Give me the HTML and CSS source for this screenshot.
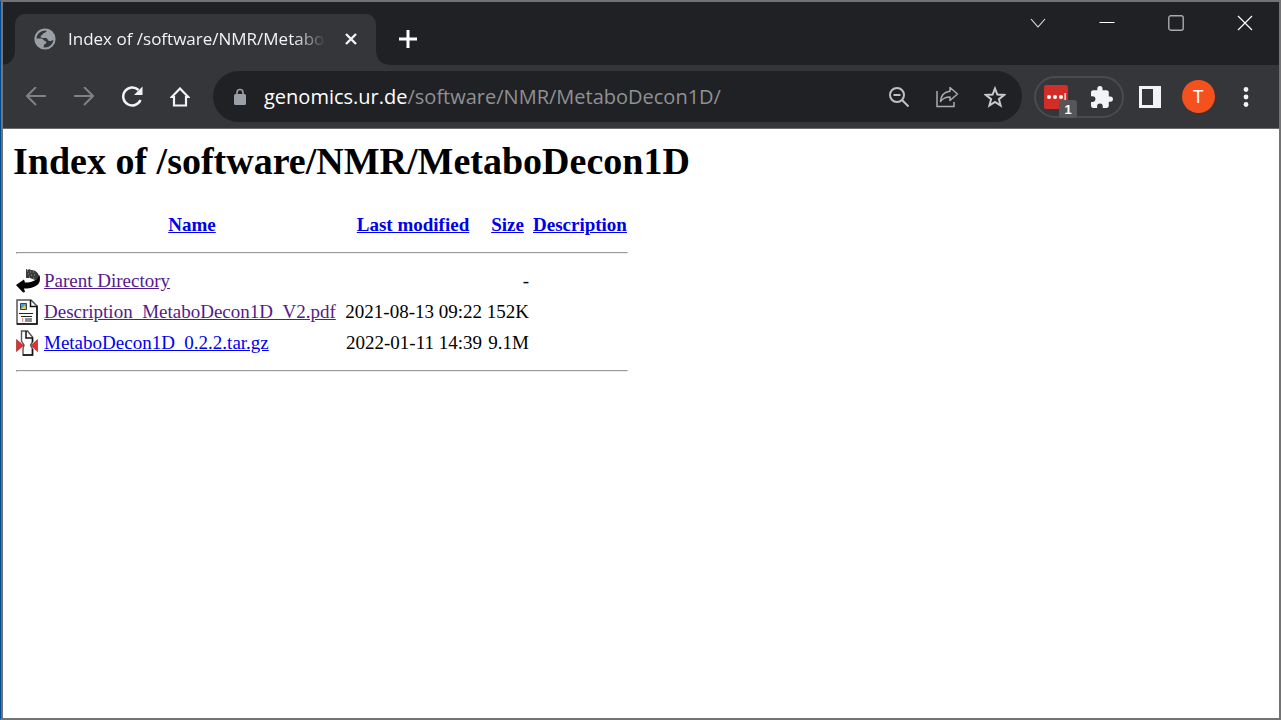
FILE: index.html
```html
<!DOCTYPE html>
<html lang="en">
<head>
<meta charset="utf-8">
<title>Index of /software/NMR/MetaboDecon1D</title>
<link rel="stylesheet" href="styles.css">
</head>
<body>
<div class="window">
  <header class="tabstrip">
    <div class="tab">
      <svg class="favicon" viewBox="0 0 22 22" width="22" height="22"><circle cx="11" cy="11" r="9.600" fill="#35363a" stroke="#9aa0a6" stroke-width="2"/><path d="M13 2c-.5 2-1 2.500-3 3-1.500.5-1 2-3 2.500-1 1 0 2.500 1.500 2.500H12c1.500 0 1.500 2.500 3 3 2 .3 3-1 5-1V8c-1-4-4-6-7-6zM2 10.500h5c2 0 2.500 2 4 2.500 2 .5 1.500 2.500 0 3-1.500.3-1 2-1.500 3.500C5 19.500 2 15.500 2 10.500z" fill="#9aa0a6"/></svg>
      <span class="tab-title">Index of /software/NMR/Metabo</span>
      <button class="tab-close" aria-label="Close tab"><svg viewBox="0 0 14 14" width="14" height="14"><path d="M2 2l10 10M12 2L2 12" stroke="#f1f3f4" stroke-width="2.4"/></svg></button>
    </div>
    <button class="new-tab" aria-label="New tab"><svg viewBox="0 0 20 20" width="20" height="20"><path d="M10 1v18M1 10h18" stroke="#fff" stroke-width="3"/></svg></button>
    <div class="controls">
      <button aria-label="Search tabs"><svg viewBox="0 0 16 16" width="16" height="16"><path d="M1 4l7 8 7-8" fill="none" stroke="#e8e8e8" stroke-width="1.1"/></svg></button>
      <button aria-label="Minimize"><svg viewBox="0 0 16 16" width="16" height="16"><path d="M.5 7.5h15" stroke="#fff"/></svg></button>
      <button aria-label="Maximize"><svg viewBox="0 0 16 16" width="16" height="16"><rect x=".8" y=".8" width="14.4" height="14.4" rx="2" fill="none" stroke="#aaa" stroke-width="1.4"/></svg></button>
      <button aria-label="Close window"><svg viewBox="0 0 16 16" width="16" height="16"><path d="M1 1l14 14M15 1L1 15" stroke="#fff" stroke-width="1.2"/></svg></button>
    </div>
  </header>
  <nav class="toolbar">
    <button class="tool" aria-label="Back"><svg viewBox="0 0 20 20" width="20" height="20"><path d="M20 9H1.500M10 0L1 9l9 9" fill="none" stroke="#808184" stroke-width="2"/></svg></button>
    <button class="tool" aria-label="Forward"><svg viewBox="0 0 20 20" width="20" height="20"><path d="M0 9h18.500M10 0l9 9-9 9" fill="none" stroke="#808184" stroke-width="2"/></svg></button>
    <button class="tool" aria-label="Reload"><svg viewBox="0 0 22 22" width="22" height="22"><path d="M19.500 14A9 9 0 1 1 17.500 4" fill="none" stroke="#f1f3f4" stroke-width="2.500"/><path d="M21.500 .5v8.500H13z" fill="#f1f3f4"/></svg></button>
    <button class="tool" aria-label="Home"><svg viewBox="0 0 20 20" width="20" height="20"><path d="M1.800 10L10 1.500l8.200 8.500H16v8.500H4V10z" fill="none" stroke="#f1f3f4" stroke-width="2.200"/></svg></button>
    <div class="omnibox">
      <svg class="lock" viewBox="0 0 14 18" width="14" height="18"><rect x="1" y="6" width="12" height="11" rx="1.500" fill="#9aa0a6"/><path d="M4 7V4.500a3 3 0 0 1 6 0V7" fill="none" stroke="#9aa0a6" stroke-width="1.600"/></svg>
      <a class="url" href="#"><span class="host">genomics.ur.de</span>/software/NMR/MetaboDecon1D/</a>
      <button class="tool" aria-label="Zoom"><svg viewBox="0 0 22 22" width="22" height="22"><circle cx="9" cy="9" r="7" fill="none" stroke="#bdc1c6" stroke-width="2"/><path d="M5.500 9h7M14 14l6.500 6.500" stroke="#bdc1c6" stroke-width="2"/></svg></button>
      <button class="tool" aria-label="Share"><svg viewBox="0 0 24 22" width="24" height="22"><path d="M2 5v15.500h17V16" fill="none" stroke="#a9abae" stroke-width="1.500"/><path d="M15 1.500L22.500 8 15 14.500V11c-4.500 0-7 1-9.500 4.500C6 9.500 9 6 15 5.300z" fill="none" stroke="#a9abae" stroke-width="1.500" stroke-linejoin="round"/></svg></button>
      <button class="tool" aria-label="Bookmark"><svg viewBox="0 0 22 22" width="22" height="22"><path d="M11 2.500l2.400 6.100 6.600.4-5.100 4.200 1.700 6.300-5.600-3.500-5.600 3.500 1.700-6.300L2 9l6.600-.4z" fill="none" stroke="#c8cacd" stroke-width="2"/></svg></button>
    </div>
    <div class="extensions">
      <button class="ext" aria-label="Password manager"><svg viewBox="0 0 24 24" width="24" height="24"><rect width="24" height="24" rx="2" fill="#d32d27"/><g fill="#fff"><circle cx="5" cy="12" r="2"/><circle cx="11" cy="12" r="2"/><circle cx="17" cy="12" r="2"/><path d="M20.500 8h1.300v7h-1.300z"/></g></svg><span class="badge">1</span></button>
      <button class="ext" aria-label="Extensions"><svg viewBox="1 0 23 23" width="24" height="24"><path d="M20.500 11H19V7c0-1.100-.9-2-2-2h-4V3.500a2.500 2.500 0 0 0-5 0V5H4c-1.100 0-2 .9-2 2v3.800h1.500a2.700 2.700 0 0 1 0 5.400H2V20c0 1.100.9 2 2 2h3.800v-1.500a2.700 2.700 0 0 1 5.400 0V22H17c1.100 0 2-.9 2-2v-4h1.500a2.500 2.500 0 0 0 0-5z" fill="#f1f3f4"/></svg></button>
    </div>
    <button class="tool" aria-label="Side panel"><svg viewBox="0 0 22 22" width="22" height="22"><rect width="22" height="22" fill="#f1f3f4"/><path d="M3 3h11v16H3z" fill="#35363a"/></svg></button>
    <button class="tool" aria-label="Profile"><span class="avatar">T</span></button>
    <button class="tool" aria-label="Menu"><svg viewBox="0 0 6 20" width="6" height="20"><g fill="#f1f3f4"><circle cx="3" cy="2.500" r="2.400"/><circle cx="3" cy="10" r="2.400"/><circle cx="3" cy="17.500" r="2.400"/></g></svg></button>
  </nav>
  <main class="page">
    <h1>Index of /software/NMR/MetaboDecon1D</h1>
    <table class="listing">
      <tr><th class="icon"></th><th class="name"><a href="#">Name</a></th><th class="date"><a href="#">Last modified</a></th><th class="size"><a href="#">Size</a></th><th class="about"><a href="#">Description</a></th></tr>
      <tr class="rule"><td colspan="5"><hr></td></tr>
      <tr>
        <td class="icon"><svg viewBox="0 0 24 26" width="24" height="26"><path d="M10 1l2 1 1-1 2 1c5 0 8 3 8.500 8L19 12l-5-2h-4z" fill="#3a3a3a"/><path d="M11 3h1M14 4h1M17 4h1M12 6h1M15 7h1M18 7h1M13 9h1M17 10h1" stroke="#999"/><path d="M23.500 7c1 5 .5 8-3 10.500-3.500 2.500-8 3-12.500 3l1 3.500-2 .5L0 17l8-5.500 1 3c6 0 12-1.500 14.500-7.500z"/></svg></td>
        <td><a class="visited" href="#">Parent Directory</a></td><td></td><td class="size">-</td><td></td>
      </tr>
      <tr>
        <td class="icon"><svg viewBox="0 0 24 26" width="24" height="26"><path d="M1 1h14l6 6v18H1z" fill="#fff" stroke="#555" stroke-width="1.500"/><path d="M14.500 1v6.500H21V25H1" fill="none" stroke="#111" stroke-width="1.500"/><path d="M4.500 4.500h6v6h-6z" fill="#4b9bd8" stroke="#345" stroke-width="1"/><path d="M5 10l4-4 1 4z" fill="#edcf42"/><path d="M3 14.500h14M5 17.500h11M9 20h7M9 22h7" stroke="#222" stroke-width="1.100"/><path d="M6 19.500h1.300v1H6zM6 21.500h1.300v1H6z" fill="#d33"/></svg></td>
        <td><a class="visited" href="#">Description_MetaboDecon1D_V2.pdf</a></td><td class="date">2021-08-13 09:22</td><td class="size">152K</td><td></td>
      </tr>
      <tr>
        <td class="icon"><svg viewBox="0 0 24 26" width="24" height="26"><path d="M5.500 1h6l5 6v5l-2 3 2 4v6H7v-6l1-4-2.500-4z" fill="#fff" stroke="#555" stroke-width="1.400"/><path d="M10 1v7h6.500v4M7 25h9.500v-6" fill="none" stroke="#111" stroke-width="1.500"/><path d="M.5 9.500L7.500 15.500.5 21.500zM21.500 9.500l-6.500 6 6.500 6z" fill="#e3302f" stroke="#933" stroke-width=".7"/></svg></td>
        <td><a href="#">MetaboDecon1D_0.2.2.tar.gz</a></td><td class="date">2022-01-11 14:39</td><td class="size">9.1M</td><td></td>
      </tr>
      <tr class="rule"><td colspan="5"><hr></td></tr>
    </table>
  </main>
</div>
</body>
</html>
```
FILE: styles.css
```css
* { box-sizing: border-box; }
body { margin: 0; background: #fff; }
button { border: 0; padding: 0; background: none; display: flex; align-items: center; justify-content: center; }
svg { display: block; flex: none; }
.window {
  min-height: 100vh;
  border: 2px solid #737373;
  border-left: 1px solid #004a8f;
  padding-left: 2px;
  background: linear-gradient(to right, #737373 2px, #fff 2px);
  font-family: "Open Sans", "Noto Sans", sans-serif;
}
.tabstrip { display: flex; height: 63px; padding: 12px 0 0 12px; background: #202124; }
.tab {
  position: relative;
  display: flex;
  align-items: center;
  width: 361px;
  padding: 0 16px 2px 19px;
  background: #35363a;
  border-radius: 10px 10px 0 0;
}
.tab::before, .tab::after { content: ""; position: absolute; bottom: 0; width: 12px; height: 12px; }
.tab::before { right: 100%; background: radial-gradient(circle at 0 0, #202124 11px, #35363a 12px); }
.tab::after { left: 100%; background: radial-gradient(circle at 100% 0, #202124 11px, #35363a 12px); }
.tab-title {
  flex: 1;
  margin: 0 16px 0 12px;
  white-space: nowrap;
  font-size: 17px;
  line-height: 24px;
  color: #f1f3f4;
  -webkit-mask-image: linear-gradient(to left, transparent, #000 32px);
  mask-image: linear-gradient(to left, transparent, #000 32px);
}
.tab-close { width: 18px; height: 24px; }
.new-tab { width: 40px; height: 49px; margin-left: 12px; }
.controls { display: flex; margin: -12px 0 0 auto; }
.controls button { width: 69px; height: 42px; }
.toolbar { display: flex; align-items: center; height: 64px; padding: 0 9px; background: #35363a; border-bottom: 1px solid #6b6b6e; }
.tool { width: 48px; height: 48px; flex: none; }
.omnibox {
  flex: 1;
  display: flex;
  align-items: center;
  min-width: 0;
  height: 51px;
  margin: 0 12px 0 9px;
  padding: 0 3px 0 20px;
  background: #202124;
  border-radius: 26px;
}
.url { flex: 1; min-width: 0; margin-left: 17px; overflow: hidden; white-space: nowrap; font-size: 20px; line-height: 30px; color: #8f9194; text-decoration: none; }
.host { color: #fff; }
.extensions { display: flex; align-items: center; justify-content: space-between; width: 90px; height: 42px; margin-right: 2px; padding: 0 8px; border: 2px solid #4a4b4f; border-radius: 21px; }
.ext { position: relative; }
.badge { position: absolute; left: 15px; top: 15px; width: 18px; height: 18px; border-radius: 3px; background: #555657; color: #fff; font-size: 13px; font-weight: 700; line-height: 20px; }
.avatar { width: 33px; height: 33px; border-radius: 50%; background: #f4511e; color: #fff; font: 18px/33px Roboto, sans-serif; }
.page { padding: 10px; font: 19px/27px "Liberation Serif", serif; color: #000; }
h1 { margin: 0 0 25px; font-size: 38px; line-height: 44px; }
.listing { border-spacing: 2px; }
.listing th, .listing td { height: 29px; padding: 1px; text-align: left; white-space: nowrap; }
.listing .icon { width: 26px; }
.listing .name { min-width: 298px; text-align: center; }
.listing .date { min-width: 140px; text-align: right; }
.listing .size { min-width: 45px; text-align: right; }
.listing .about { min-width: 97px; }
.listing th.date, .listing th.size { text-align: center; }
.listing .rule td { height: 23px; line-height: 0; }
hr { margin: 10px 0 9px; border: 1px solid; border-color: #9a9a9a #eee #eee #9a9a9a; }
.listing a { color: #00e; }
.listing .visited { color: #551a8b; }
```
